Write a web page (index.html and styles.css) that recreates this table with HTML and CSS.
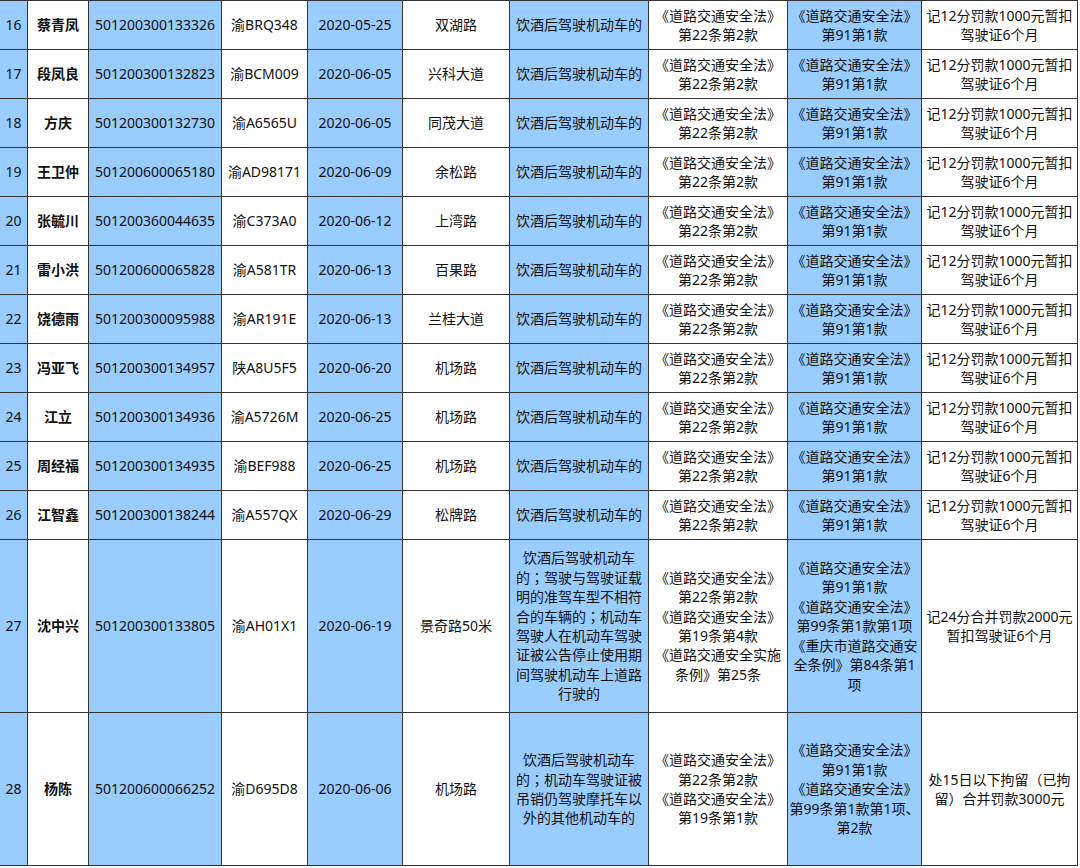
FILE: index.html
```html
<!DOCTYPE html>
<html lang="zh-CN">
<head>
<meta charset="utf-8">
<title>酒驾名单</title>
<link rel="stylesheet" href="styles.css">
</head>
<body>
<div class="sheet">
  <div class="row">
    <div class="c blue">16</div><div class="c name">蔡青凤</div><div class="c blue">501200300133326</div><div class="c">渝BRQ348</div><div class="c blue">2020-05-25</div><div class="c">双湖路</div><div class="c blue">饮酒后驾驶机动车的</div><div class="c">《道路交通安全法》<br>第22条第2款</div><div class="c blue">《道路交通安全法》<br>第91第1款</div><div class="c">记12分罚款1000元暂扣<br>驾驶证6个月</div>
  </div>
  <div class="row">
    <div class="c blue">17</div><div class="c name">段凤良</div><div class="c blue">501200300132823</div><div class="c">渝BCM009</div><div class="c blue">2020-06-05</div><div class="c">兴科大道</div><div class="c blue">饮酒后驾驶机动车的</div><div class="c">《道路交通安全法》<br>第22条第2款</div><div class="c blue">《道路交通安全法》<br>第91第1款</div><div class="c">记12分罚款1000元暂扣<br>驾驶证6个月</div>
  </div>
  <div class="row">
    <div class="c blue">18</div><div class="c name">方庆</div><div class="c blue">501200300132730</div><div class="c">渝A6565U</div><div class="c blue">2020-06-05</div><div class="c">同茂大道</div><div class="c blue">饮酒后驾驶机动车的</div><div class="c">《道路交通安全法》<br>第22条第2款</div><div class="c blue">《道路交通安全法》<br>第91第1款</div><div class="c">记12分罚款1000元暂扣<br>驾驶证6个月</div>
  </div>
  <div class="row">
    <div class="c blue">19</div><div class="c name">王卫仲</div><div class="c blue">501200600065180</div><div class="c">渝AD98171</div><div class="c blue">2020-06-09</div><div class="c">余松路</div><div class="c blue">饮酒后驾驶机动车的</div><div class="c">《道路交通安全法》<br>第22条第2款</div><div class="c blue">《道路交通安全法》<br>第91第1款</div><div class="c">记12分罚款1000元暂扣<br>驾驶证6个月</div>
  </div>
  <div class="row">
    <div class="c blue">20</div><div class="c name">张毓川</div><div class="c blue">501200360044635</div><div class="c">渝C373A0</div><div class="c blue">2020-06-12</div><div class="c">上湾路</div><div class="c blue">饮酒后驾驶机动车的</div><div class="c">《道路交通安全法》<br>第22条第2款</div><div class="c blue">《道路交通安全法》<br>第91第1款</div><div class="c">记12分罚款1000元暂扣<br>驾驶证6个月</div>
  </div>
  <div class="row">
    <div class="c blue">21</div><div class="c name">雷小洪</div><div class="c blue">501200600065828</div><div class="c">渝A581TR</div><div class="c blue">2020-06-13</div><div class="c">百果路</div><div class="c blue">饮酒后驾驶机动车的</div><div class="c">《道路交通安全法》<br>第22条第2款</div><div class="c blue">《道路交通安全法》<br>第91第1款</div><div class="c">记12分罚款1000元暂扣<br>驾驶证6个月</div>
  </div>
  <div class="row">
    <div class="c blue">22</div><div class="c name">饶德雨</div><div class="c blue">501200300095988</div><div class="c">渝AR191E</div><div class="c blue">2020-06-13</div><div class="c">兰桂大道</div><div class="c blue">饮酒后驾驶机动车的</div><div class="c">《道路交通安全法》<br>第22条第2款</div><div class="c blue">《道路交通安全法》<br>第91第1款</div><div class="c">记12分罚款1000元暂扣<br>驾驶证6个月</div>
  </div>
  <div class="row">
    <div class="c blue">23</div><div class="c name">冯亚飞</div><div class="c blue">501200300134957</div><div class="c">陕A8U5F5</div><div class="c blue">2020-06-20</div><div class="c">机场路</div><div class="c blue">饮酒后驾驶机动车的</div><div class="c">《道路交通安全法》<br>第22条第2款</div><div class="c blue">《道路交通安全法》<br>第91第1款</div><div class="c">记12分罚款1000元暂扣<br>驾驶证6个月</div>
  </div>
  <div class="row">
    <div class="c blue">24</div><div class="c name">江立</div><div class="c blue">501200300134936</div><div class="c">渝A5726M</div><div class="c blue">2020-06-25</div><div class="c">机场路</div><div class="c blue">饮酒后驾驶机动车的</div><div class="c">《道路交通安全法》<br>第22条第2款</div><div class="c blue">《道路交通安全法》<br>第91第1款</div><div class="c">记12分罚款1000元暂扣<br>驾驶证6个月</div>
  </div>
  <div class="row">
    <div class="c blue">25</div><div class="c name">周经福</div><div class="c blue">501200300134935</div><div class="c">渝BEF988</div><div class="c blue">2020-06-25</div><div class="c">机场路</div><div class="c blue">饮酒后驾驶机动车的</div><div class="c">《道路交通安全法》<br>第22条第2款</div><div class="c blue">《道路交通安全法》<br>第91第1款</div><div class="c">记12分罚款1000元暂扣<br>驾驶证6个月</div>
  </div>
  <div class="row">
    <div class="c blue">26</div><div class="c name">江智鑫</div><div class="c blue">501200300138244</div><div class="c">渝A557QX</div><div class="c blue">2020-06-29</div><div class="c">松牌路</div><div class="c blue">饮酒后驾驶机动车的</div><div class="c">《道路交通安全法》<br>第22条第2款</div><div class="c blue">《道路交通安全法》<br>第91第1款</div><div class="c">记12分罚款1000元暂扣<br>驾驶证6个月</div>
  </div>
  <div class="row tall">
    <div class="c blue">27</div><div class="c name">沈中兴</div><div class="c blue">501200300133805</div><div class="c">渝AH01X1</div><div class="c blue">2020-06-19</div><div class="c">景奇路50米</div><div class="c blue"><div class="t">饮酒后驾驶机动车<br>的<span class="punct" lang="zh-TW">；</span>驾驶与驾驶证载<br>明的准驾车型不相符<br>合的车辆的<span class="punct" lang="zh-TW">；</span>机动车<br>驾驶人在机动车驾驶<br>证被公告停止使用期<br>间驾驶机动车上道路<br>行驶的</div></div><div class="c">《道路交通安全法》<br>第22条第2款<br>《道路交通安全法》<br>第19条第4款<br>《道路交通安全实施<br>条例》第25条</div><div class="c blue">《道路交通安全法》<br>第91第1款<br>《道路交通安全法》<br>第99条第1款第1项<br>《重庆市道路交通安<br>全条例》第84条第1<br>项</div><div class="c">记24分合并罚款2000元<br>暂扣驾驶证6个月</div>
  </div>
  <div class="row last">
    <div class="c blue">28</div><div class="c name">杨陈</div><div class="c blue">501200600066252</div><div class="c">渝D695D8</div><div class="c blue">2020-06-06</div><div class="c">机场路</div><div class="c blue"><div class="t">饮酒后驾驶机动车<br>的<span class="punct" lang="zh-TW">；</span>机动车驾驶证被<br>吊销仍驾驶摩托车以<br>外的其他机动车的</div></div><div class="c">《道路交通安全法》<br>第22条第2款<br>《道路交通安全法》<br>第19条第1款</div><div class="c blue">《道路交通安全法》<br>第91第1款<br>《道路交通安全法》<br>第99条第1款第1项、<br>第2款</div><div class="c"><div class="t">处15日以下拘留（已拘<br>留）合并罚款3000元</div></div>
  </div>
</div>
</body>
</html>
```

FILE: styles.css
```css
html, body {
  margin: 0;
  padding: 0;
  background: #ffffff;
}

.sheet {
  width: 1078px;
  border-top: 1px solid #333333;
  font-family: "Noto Sans", "Noto Sans CJK SC", sans-serif;
  font-size: 14px;
  line-height: 19.4px;
  color: #111111;
}

.row {
  display: grid;
  grid-template-columns: 28px 61px 133px 86px 95px 107px 139px 139px 134px 156px;
  height: 49px;
}

.row.tall {
  height: 173px;
}

.row.last {
  height: 153px;
}

.c {
  box-sizing: border-box;
  display: flex;
  align-items: center;
  justify-content: center;
  text-align: center;
  border-right: 1px solid #333333;
  border-bottom: 1px solid #333333;
  white-space: nowrap;
  overflow: hidden;
}

.t {
  text-align: center;
}

.blue {
  background: #99ccff;
}

.name {
  font-weight: bold;
}

.punct {
  font-family: "Noto Sans CJK TC", sans-serif;
}
```
